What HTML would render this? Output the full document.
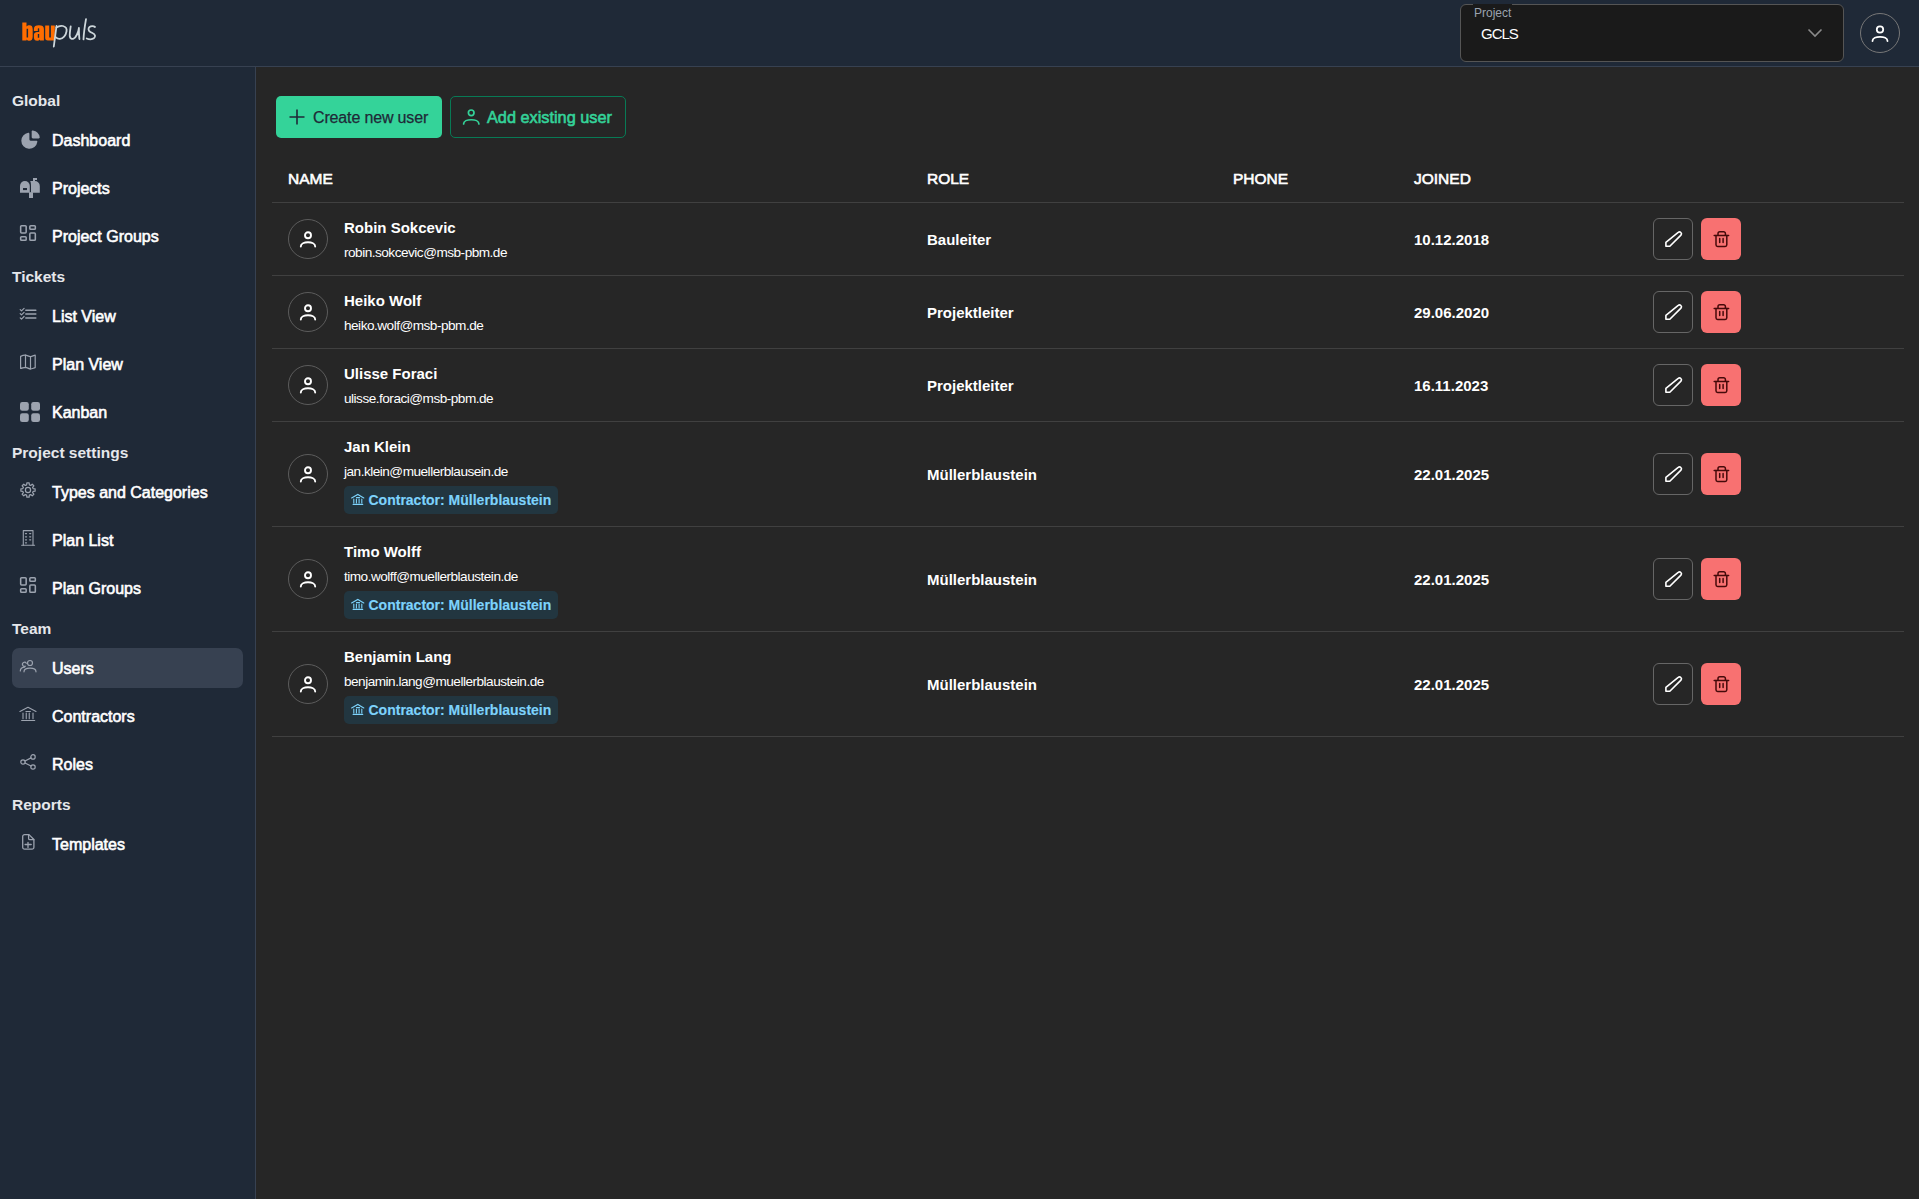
<!DOCTYPE html>
<html><head><meta charset="utf-8">
<style>
*{box-sizing:border-box;margin:0;padding:0}
html,body{width:1919px;height:1199px;overflow:hidden;background:#262626;font-family:"Liberation Sans",sans-serif;color:#fff}
.a{position:absolute}
.t{position:absolute;white-space:nowrap;line-height:20px}
.hdr{position:absolute;left:0;top:0;width:1919px;height:67px;background:#1f2937;border-bottom:1px solid #374151}
.side{position:absolute;left:0;top:67px;width:256px;height:1132px;background:#1f2937;border-right:1px solid #374151}
.sb{-webkit-text-stroke:0.6px currentColor}
.sec{font-size:15.5px;font-weight:bold;color:#e5e7eb;left:12px}
.itm{font-size:16px;color:#fff;left:52px;-webkit-text-stroke:0.6px #fff}
.ico{position:absolute;left:18px;width:24px;height:24px}
.ico svg{width:24px;height:24px;display:block}
.th{font-size:15.5px;color:#fff;-webkit-text-stroke:0.6px #fff}
.rowb{position:absolute;left:272px;width:1632px;height:1px;background:#404040}
.av{position:absolute;left:288px;width:40px;height:40px;border:1px solid #5c5c5c;border-radius:50%}
.av svg{position:absolute;left:9px;top:9px;width:20px;height:20px}
.nm{font-size:15px;font-weight:bold;color:#fff;left:344px}
.em{font-size:13.6px;color:#fff;left:344px;letter-spacing:-0.5px}
.rl{font-size:15px;font-weight:bold;color:#fff;left:927px}
.jd{font-size:15px;font-weight:bold;color:#fff;left:1414px;letter-spacing:0px}
.badge{position:absolute;left:344px;width:214px;height:28px;background:#223640;border-radius:5px}
.badge .bt{position:absolute;left:24.5px;top:4px;line-height:20px;font-size:14px;font-weight:bold;color:#7dd3fc;white-space:nowrap;-webkit-text-stroke:0.15px #7dd3fc}
.badge svg{position:absolute;left:7px;top:7px;width:14px;height:14px}
.eb{position:absolute;left:1653px;width:40px;height:42px;border:1px solid #666;border-radius:6px}
.db{position:absolute;left:1701px;width:40px;height:42px;background:#f87171;border-radius:6px}
.eb svg,.db svg{position:absolute;left:10px;top:11px;width:20px;height:20px}
</style></head><body>

<!-- header -->
<div class="hdr"></div>
<svg class="a" style="left:0;top:0" width="110" height="60" viewBox="0 0 110 60">
  <g fill="#ff6d00" fill-rule="evenodd">
    <path d="M22.3 22.5 H26.5 V26.6 C27.2 25.8 28.2 25.3 29.5 25.3 C31.8 25.3 32.7 26.8 32.7 29.5 V36.5 C32.7 39.3 31.7 40.8 29.4 40.8 C28.2 40.8 27.2 40.3 26.5 39.4 V40.6 H22.3 Z M26.6 28.7 H28.1 V37.5 H26.6 Z"/>
    <path d="M33.9 29.2 C33.9 26.3 35.8 25.3 38.9 25.3 C42.1 25.3 43.9 26.3 43.9 29 V40.6 H39.9 V39.6 C39.2 40.4 38.3 40.8 37.2 40.8 C35 40.8 33.9 39.6 33.9 37.2 V35 C33.9 33 35 32.3 37.5 31.9 H39.2 V28.8 C39.2 28.4 39 28.3 38.5 28.3 C38 28.3 37.8 28.5 37.8 29 V31 H33.9 Z M37.8 34.1 H39.2 V37.8 H37.8 Z"/>
    <path d="M45.2 25.6 H49.2 V37.5 H50.9 V25.6 H54.8 V40.6 H47.9 C46 40.6 45.2 39.6 45.2 37.8 Z"/>
  </g>
  <g fill="none" stroke="#cdd6da" stroke-width="1.8" stroke-linecap="round" stroke-linejoin="round">
    <path d="M53.8 46.5 L56.5 26"/>
    <path d="M56.4 27.5 C58.5 26 61 25.5 63 26 C66 26.8 67 29 66.5 31.5 C65.8 35.5 63 38.7 60 38.9 C58.5 39 57 38.5 56 37.4"/>
    <path d="M70.7 26.3 C70.2 30 69.5 34 69.8 36.5 C70.2 38.8 72 39.2 73.5 38.7 C76 37.8 78.5 32 78.9 28 C78.9 32 79 36 79.4 39"/>
    <path d="M86 19.2 C85 25 83.8 32 83.5 39.4"/>
    <path d="M95 27 C93.8 26 91 25.8 89.5 27 C88 28.2 88.3 30.5 90 31.7 C91.8 33 94.5 33.5 95 35.5 C95.5 38 93 39.3 90.5 39.3 C89 39.3 87.5 38.9 86.7 38.5"/>
  </g>
</svg>
<!-- project select -->
<div class="a" style="left:1460px;top:4px;width:384px;height:58px;background:#1a1a1a;border:1px solid #555;border-radius:6px"></div>
<div class="a" style="left:1473px;top:4px;width:39px;height:2px;background:#1a1a1a"></div>
<div class="t" style="left:1474px;top:3px;font-size:12px;color:#9ca3af">Project</div>
<div class="t" style="left:1481px;top:24px;font-size:15px;color:#fff;letter-spacing:-1px">GCLS</div>
<svg class="a" style="left:1806px;top:26px" width="18" height="14" viewBox="0 0 18 14" fill="none" stroke="#8a8a8a" stroke-width="1.6"><path d="M2.5 3.5 L9 10 L15.5 3.5"/></svg>
<div class="a" style="left:1860px;top:13px;width:40px;height:40px;border:1px solid #777;border-radius:50%"></div>
<svg class="a" style="left:1870px;top:23px" width="20" height="20" viewBox="0 0 20 20" fill="none" stroke="#fff" stroke-width="1.8"><circle cx="10" cy="6.5" r="3.2"/><path d="M2.5 18 C2.5 12.5 17.5 12.5 17.5 18" stroke-linecap="round"/></svg>

<!-- sidebar -->
<div class="side"></div>
<div class="a" style="left:12px;top:648px;width:231px;height:40px;background:#374151;border-radius:7px"></div>

<div class="t sec" style="top:91px">Global</div>
<div class="t itm" style="top:131px">Dashboard</div>
<div class="t itm" style="top:179px">Projects</div>
<div class="t itm" style="top:227px">Project Groups</div>
<div class="t sec" style="top:267px">Tickets</div>
<div class="t itm" style="top:307px">List View</div>
<div class="t itm" style="top:355px">Plan View</div>
<div class="t itm" style="top:403px">Kanban</div>
<div class="t sec" style="top:443px">Project settings</div>
<div class="t itm" style="top:483px">Types and Categories</div>
<div class="t itm" style="top:531px">Plan List</div>
<div class="t itm" style="top:579px">Plan Groups</div>
<div class="t sec" style="top:619px">Team</div>
<div class="t itm" style="top:659px">Users</div>
<div class="t itm" style="top:707px">Contractors</div>
<div class="t itm" style="top:755px">Roles</div>
<div class="t sec" style="top:795px">Reports</div>
<div class="t itm" style="top:835px">Templates</div>



<!-- icons -->
<svg class="a" style="left:18.5px;top:127.7px" width="23.1" height="23.1" viewBox="0 0 20 20" fill="#9ca3af" stroke="none"><path d="M12 9a1 1 0 01-1-1V3c0-.553.45-1.008.997-.93a7.004 7.004 0 015.933 5.933c.078.547-.378.997-.93.997h-5z"/><path d="M8.003 4.07C8.55 3.992 9 4.447 9 5v5a1 1 0 001 1h5c.552 0 1.008.45.93.997A7.001 7.001 0 012 11a7.002 7.002 0 016.003-6.93z"/></svg>
<svg class="a" style="left:20px;top:178px" width="20" height="20" viewBox="0 0 20 20" fill="#9ca3af" stroke="none"><path d="M0 14.7V7.9A4.9 4.9 0 0 1 9.8 7.9V14.7Z"/><path d="M10.2 3H14.8A5 5 0 0 1 19.8 8V14.7H11V8C11 6 10.8 4.2 10.2 3Z"/><rect x="9" y="14.2" width="4" height="5.8"/><rect x="13" y="0" width="2" height="3.5"/><rect x="13" y="0" width="4" height="2"/><rect x="3" y="10" width="4" height="2.1" fill="#1f2937"/></svg>
<svg class="a" style="left:16.7px;top:222.4px" width="22" height="22" viewBox="0 0 24 24" fill="none" stroke="#9ca3af" stroke-width="1.7" stroke-linecap="round" stroke-linejoin="round"><path d="M5 4h4a1 1 0 0 1 1 1v6a1 1 0 0 1 -1 1h-4a1 1 0 0 1 -1 -1v-6a1 1 0 0 1 1 -1"/><path d="M5 16h4a1 1 0 0 1 1 1v2a1 1 0 0 1 -1 1h-4a1 1 0 0 1 -1 -1v-2a1 1 0 0 1 1 -1"/><path d="M15 12h4a1 1 0 0 1 1 1v6a1 1 0 0 1 -1 1h-4a1 1 0 0 1 -1 -1v-6a1 1 0 0 1 1 -1"/><path d="M15 4h4a1 1 0 0 1 1 1v2a1 1 0 0 1 -1 1h-4a1 1 0 0 1 -1 -1v-2a1 1 0 0 1 1 -1"/></svg>
<svg class="a" style="left:16.7px;top:574.4px" width="22" height="22" viewBox="0 0 24 24" fill="none" stroke="#9ca3af" stroke-width="1.7" stroke-linecap="round" stroke-linejoin="round"><path d="M5 4h4a1 1 0 0 1 1 1v6a1 1 0 0 1 -1 1h-4a1 1 0 0 1 -1 -1v-6a1 1 0 0 1 1 -1"/><path d="M5 16h4a1 1 0 0 1 1 1v2a1 1 0 0 1 -1 1h-4a1 1 0 0 1 -1 -1v-2a1 1 0 0 1 1 -1"/><path d="M15 12h4a1 1 0 0 1 1 1v6a1 1 0 0 1 -1 1h-4a1 1 0 0 1 -1 -1v-6a1 1 0 0 1 1 -1"/><path d="M15 4h4a1 1 0 0 1 1 1v2a1 1 0 0 1 -1 1h-4a1 1 0 0 1 -1 -1v-2a1 1 0 0 1 1 -1"/></svg>
<svg class="a" style="left:14px;top:300px" width="30" height="30" viewBox="0 0 30 30" fill="none" stroke="#9ca3af" stroke-width="1.2" stroke-linecap="round" stroke-linejoin="round"><path d="M6.2 9.6l1.3 1.3l2.6 -2.6"/><path d="M6.2 13.6l1.3 1.3l2.6 -2.6"/><path d="M6.2 17.8l1.3 1.3l2.6 -2.6"/><path d="M11.8 10.3h10" stroke-width="1.5"/><path d="M11.8 14.1h10" stroke-width="1.5"/><path d="M11.8 18.1h10" stroke-width="1.5"/></svg>
<svg class="a" style="left:14px;top:348px" width="30" height="30" viewBox="0 0 30 30" fill="none" stroke="#9ca3af" stroke-width="1.2" stroke-linecap="round" stroke-linejoin="round"><path d="M6.6 8.4C8.3 7.6 10 7 11.5 7.2C13.2 7.4 14.8 8.5 16.5 8.6C18 8.6 19.6 7.4 21.2 7.2V19.6C19.6 20 18 21 16.5 21C14.8 21 13.2 19.4 11.5 19.3C10 19.3 8.3 20.2 6.6 20.5Z"/><path d="M11.5 7.2V19.3"/><path d="M16.5 8.6V21"/></svg>
<svg class="a" style="left:20px;top:402px" width="20" height="20" viewBox="0 0 20 20" fill="#9ca3af" stroke="none"><rect x="0" y="0" width="8.8" height="8.8" rx="2.3"/><rect x="11.2" y="0" width="8.8" height="8.8" rx="2.3"/><rect x="0" y="11.2" width="8.8" height="8.8" rx="2.3"/><rect x="11.2" y="11.2" width="8.8" height="8.8" rx="2.3"/></svg>
<svg class="a" style="left:14px;top:476px" width="30" height="30" viewBox="0 0 30 30" fill="none" stroke="#9ca3af" stroke-width="1.2" stroke-linecap="round" stroke-linejoin="round"><path d="M12.64 8.88 L12.85 6.89 L15.15 6.89 L15.36 8.88 L16.66 9.41 L18.22 8.16 L19.84 9.78 L18.59 11.34 L19.12 12.64 L21.11 12.85 L21.11 15.15 L19.12 15.36 L18.59 16.66 L19.84 18.22 L18.22 19.84 L16.66 18.59 L15.36 19.12 L15.15 21.11 L12.85 21.11 L12.64 19.12 L11.34 18.59 L9.78 19.84 L8.16 18.22 L9.41 16.66 L8.88 15.36 L6.89 15.15 L6.89 12.85 L8.88 12.64 L9.41 11.34 L8.16 9.78 L9.78 8.16 L11.34 9.41 Z"/><circle cx="14" cy="14" r="2.6"/></svg>
<svg class="a" style="left:14px;top:524px" width="30" height="30" viewBox="0 0 30 30" fill="none" stroke="#9ca3af" stroke-width="1.1" stroke-linecap="round" stroke-linejoin="round"><path d="M7.7 21.2H20.6"/><path d="M9.3 21.2V6.6H19V21.2"/><path d="M11.5 9.6h1M15.7 9.6h1M11.5 12.8h1M15.7 12.8h1M11.5 15.8h1M15.7 15.8h1M11.5 18.8h1" stroke-width="1.3"/></svg>
<svg class="a" style="left:14px;top:652px" width="30" height="30" viewBox="0 0 30 30" fill="none" stroke="#9ca3af" stroke-width="1.2" stroke-linecap="round" stroke-linejoin="round"><circle cx="16" cy="11" r="2.5"/><path d="M12.3 11.3A2.05 2.05 0 1 0 11.4 14.2"/><path d="M10 19.8C10 15 22 15 22 19.8"/><path d="M6.3 19C6.3 16.6 8 15.3 10.6 15.1"/></svg>
<svg class="a" style="left:14px;top:700px" width="30" height="30" viewBox="0 0 30 30" fill="none" stroke="#9ca3af" stroke-width="1.1" stroke-linecap="round" stroke-linejoin="round"><path d="M5.9 11.5L14 7.3L22 11.5"/><path d="M11.9 11.5H16.4"/><path d="M9 13.1V18.7M12.25 13.1V18.7M15.25 13.1V18.7M19 13.1V18.7"/><path d="M7.6 20.5H20.7"/></svg>
<svg class="a" style="left:14px;top:748px" width="30" height="30" viewBox="0 0 30 30" fill="none" stroke="#9ca3af" stroke-width="1.2" stroke-linecap="round" stroke-linejoin="round"><circle cx="9" cy="14" r="2.2"/><circle cx="19" cy="8.9" r="2.2"/><circle cx="19" cy="19" r="2.2"/><path d="M11 13L17 9.9"/><path d="M11 15L17 18"/></svg>
<svg class="a" style="left:14px;top:828px" width="30" height="30" viewBox="0 0 30 30" fill="none" stroke="#9ca3af" stroke-width="1.3" stroke-linecap="round" stroke-linejoin="round"><path d="M14.6 6.6V10.4A1.3 1.3 0 0 0 15.9 11.7H19.8"/><path d="M10.6 6.6H15L19.9 11.5V19.3A1.9 1.9 0 0 1 18 21.2H10.6A1.9 1.9 0 0 1 8.7 19.3V8.5A1.9 1.9 0 0 1 10.6 6.6Z"/><path d="M14 14.3V19.4M11.1 16.5H17.2"/></svg>
<!-- /icons -->
<!-- content buttons -->
<div class="a" style="left:276px;top:96px;width:166px;height:42px;background:#34d399;border-radius:5px"></div>
<svg class="a" style="left:287px;top:107px" width="20" height="20" viewBox="0 0 20 20" fill="none" stroke="#1f2937" stroke-width="1.6"><path d="M10 2.5 V17.5 M2.5 10 H17.5"/></svg>
<div class="t" style="left:313px;top:108px;font-size:16px;color:#1f2937;-webkit-text-stroke:0.25px #1f2937;letter-spacing:-0.15px">Create new user</div>

<div class="a" style="left:450px;top:96px;width:176px;height:42px;border:1px solid #087a55;border-radius:5px"></div>
<svg class="a" style="left:461px;top:107px" width="20" height="20" viewBox="0 0 20 20" fill="none" stroke="#34d399" stroke-width="1.7"><circle cx="10.2" cy="5.8" r="2.8"/><path d="M2.6 17 C2.6 11.3 17.9 11.3 17.9 17" stroke-linecap="round"/></svg>
<div class="t" style="left:487px;top:107px;font-size:16.3px;color:#34d399;-webkit-text-stroke:0.6px #34d399">Add existing user</div>

<!-- table header -->
<div class="t th" style="left:288px;top:169px">NAME</div>
<div class="t th" style="left:927px;top:169px">ROLE</div>
<div class="t th" style="left:1233px;top:169px">PHONE</div>
<div class="t th" style="left:1414px;top:169px">JOINED</div>
<div class="rowb" style="top:202px"></div>





<!-- rows -->
<div class="t nm" style="top:218px">Robin Sokcevic</div>
<div class="t em" style="top:243px">robin.sokcevic@msb-pbm.de</div>
<div class="av" style="top:219px"><svg viewBox="0 0 20 20" fill="none" stroke="#fff" stroke-width="1.9"><circle cx="10" cy="6.3" r="3"/><path d="M2.8 17.5 C2.8 11.8 17.2 11.8 17.2 17.5" stroke-linecap="round"/></svg></div>
<div class="t rl" style="top:230px">Bauleiter</div>
<div class="t jd" style="top:230px">10.12.2018</div>
<div class="eb" style="top:218px"><svg viewBox="0 0 20 20" fill="none" stroke="#fff" stroke-width="1.6" stroke-linejoin="round"><path d="M14.2 2.4 a1.95 1.95 0 0 1 2.75 2.75 L5.8 16.3 H1.9 V12.4 Z"/></svg></div>
<div class="db" style="top:218px"><svg viewBox="0 0 20 20" fill="none" stroke="#450a0a" stroke-width="1.5" stroke-linecap="round" stroke-linejoin="round"><path d="M3.2 6.4 H17.6"/><path d="M7 6.3 V4.6 a1.8 1.8 0 0 1 1.8 -1.8 H12.6 a1.8 1.8 0 0 1 1.8 1.8 V6.3"/><path d="M5 6.5 V15.8 a1.6 1.6 0 0 0 1.6 1.6 H14.2 a1.6 1.6 0 0 0 1.6 -1.6 V6.5"/><path d="M8.7 9.5 V13.6 M12.1 9.5 V13.6"/></svg></div>
<div class="rowb" style="top:275px"></div>
<div class="t nm" style="top:291px">Heiko Wolf</div>
<div class="t em" style="top:316px">heiko.wolf@msb-pbm.de</div>
<div class="av" style="top:292px"><svg viewBox="0 0 20 20" fill="none" stroke="#fff" stroke-width="1.9"><circle cx="10" cy="6.3" r="3"/><path d="M2.8 17.5 C2.8 11.8 17.2 11.8 17.2 17.5" stroke-linecap="round"/></svg></div>
<div class="t rl" style="top:303px">Projektleiter</div>
<div class="t jd" style="top:303px">29.06.2020</div>
<div class="eb" style="top:291px"><svg viewBox="0 0 20 20" fill="none" stroke="#fff" stroke-width="1.6" stroke-linejoin="round"><path d="M14.2 2.4 a1.95 1.95 0 0 1 2.75 2.75 L5.8 16.3 H1.9 V12.4 Z"/></svg></div>
<div class="db" style="top:291px"><svg viewBox="0 0 20 20" fill="none" stroke="#450a0a" stroke-width="1.5" stroke-linecap="round" stroke-linejoin="round"><path d="M3.2 6.4 H17.6"/><path d="M7 6.3 V4.6 a1.8 1.8 0 0 1 1.8 -1.8 H12.6 a1.8 1.8 0 0 1 1.8 1.8 V6.3"/><path d="M5 6.5 V15.8 a1.6 1.6 0 0 0 1.6 1.6 H14.2 a1.6 1.6 0 0 0 1.6 -1.6 V6.5"/><path d="M8.7 9.5 V13.6 M12.1 9.5 V13.6"/></svg></div>
<div class="rowb" style="top:348px"></div>
<div class="t nm" style="top:364px">Ulisse Foraci</div>
<div class="t em" style="top:389px">ulisse.foraci@msb-pbm.de</div>
<div class="av" style="top:365px"><svg viewBox="0 0 20 20" fill="none" stroke="#fff" stroke-width="1.9"><circle cx="10" cy="6.3" r="3"/><path d="M2.8 17.5 C2.8 11.8 17.2 11.8 17.2 17.5" stroke-linecap="round"/></svg></div>
<div class="t rl" style="top:376px">Projektleiter</div>
<div class="t jd" style="top:376px">16.11.2023</div>
<div class="eb" style="top:364px"><svg viewBox="0 0 20 20" fill="none" stroke="#fff" stroke-width="1.6" stroke-linejoin="round"><path d="M14.2 2.4 a1.95 1.95 0 0 1 2.75 2.75 L5.8 16.3 H1.9 V12.4 Z"/></svg></div>
<div class="db" style="top:364px"><svg viewBox="0 0 20 20" fill="none" stroke="#450a0a" stroke-width="1.5" stroke-linecap="round" stroke-linejoin="round"><path d="M3.2 6.4 H17.6"/><path d="M7 6.3 V4.6 a1.8 1.8 0 0 1 1.8 -1.8 H12.6 a1.8 1.8 0 0 1 1.8 1.8 V6.3"/><path d="M5 6.5 V15.8 a1.6 1.6 0 0 0 1.6 1.6 H14.2 a1.6 1.6 0 0 0 1.6 -1.6 V6.5"/><path d="M8.7 9.5 V13.6 M12.1 9.5 V13.6"/></svg></div>
<div class="rowb" style="top:421px"></div>
<div class="t nm" style="top:437px">Jan Klein</div>
<div class="t em" style="top:462px">jan.klein@muellerblausein.de</div>
<div class="av" style="top:454px"><svg viewBox="0 0 20 20" fill="none" stroke="#fff" stroke-width="1.9"><circle cx="10" cy="6.3" r="3"/><path d="M2.8 17.5 C2.8 11.8 17.2 11.8 17.2 17.5" stroke-linecap="round"/></svg></div>
<div class="t rl" style="top:465px">Müllerblaustein</div>
<div class="t jd" style="top:465px">22.01.2025</div>
<div class="eb" style="top:453px"><svg viewBox="0 0 20 20" fill="none" stroke="#fff" stroke-width="1.6" stroke-linejoin="round"><path d="M14.2 2.4 a1.95 1.95 0 0 1 2.75 2.75 L5.8 16.3 H1.9 V12.4 Z"/></svg></div>
<div class="db" style="top:453px"><svg viewBox="0 0 20 20" fill="none" stroke="#450a0a" stroke-width="1.5" stroke-linecap="round" stroke-linejoin="round"><path d="M3.2 6.4 H17.6"/><path d="M7 6.3 V4.6 a1.8 1.8 0 0 1 1.8 -1.8 H12.6 a1.8 1.8 0 0 1 1.8 1.8 V6.3"/><path d="M5 6.5 V15.8 a1.6 1.6 0 0 0 1.6 1.6 H14.2 a1.6 1.6 0 0 0 1.6 -1.6 V6.5"/><path d="M8.7 9.5 V13.6 M12.1 9.5 V13.6"/></svg></div>
<div class="badge" style="top:486px"><svg viewBox="0 0 14 14" fill="none" stroke="#7dd3fc" stroke-width="1.1" stroke-linecap="round"><path d="M0.6 4.9 L6.8 1.5 L12.8 5"/><path d="M5.5 4.6 H8.5"/><path d="M2.8 6.1 V9.9 M5.4 6.1 V9.9 M8.1 6.1 V9.9 M10.8 6.1 V9.9"/><path d="M2.1 11.4 H11.7"/></svg><div class="bt">Contractor: Müllerblaustein</div></div>
<div class="rowb" style="top:526px"></div>
<div class="t nm" style="top:542px">Timo Wolff</div>
<div class="t em" style="top:567px">timo.wolff@muellerblaustein.de</div>
<div class="av" style="top:559px"><svg viewBox="0 0 20 20" fill="none" stroke="#fff" stroke-width="1.9"><circle cx="10" cy="6.3" r="3"/><path d="M2.8 17.5 C2.8 11.8 17.2 11.8 17.2 17.5" stroke-linecap="round"/></svg></div>
<div class="t rl" style="top:570px">Müllerblaustein</div>
<div class="t jd" style="top:570px">22.01.2025</div>
<div class="eb" style="top:558px"><svg viewBox="0 0 20 20" fill="none" stroke="#fff" stroke-width="1.6" stroke-linejoin="round"><path d="M14.2 2.4 a1.95 1.95 0 0 1 2.75 2.75 L5.8 16.3 H1.9 V12.4 Z"/></svg></div>
<div class="db" style="top:558px"><svg viewBox="0 0 20 20" fill="none" stroke="#450a0a" stroke-width="1.5" stroke-linecap="round" stroke-linejoin="round"><path d="M3.2 6.4 H17.6"/><path d="M7 6.3 V4.6 a1.8 1.8 0 0 1 1.8 -1.8 H12.6 a1.8 1.8 0 0 1 1.8 1.8 V6.3"/><path d="M5 6.5 V15.8 a1.6 1.6 0 0 0 1.6 1.6 H14.2 a1.6 1.6 0 0 0 1.6 -1.6 V6.5"/><path d="M8.7 9.5 V13.6 M12.1 9.5 V13.6"/></svg></div>
<div class="badge" style="top:591px"><svg viewBox="0 0 14 14" fill="none" stroke="#7dd3fc" stroke-width="1.1" stroke-linecap="round"><path d="M0.6 4.9 L6.8 1.5 L12.8 5"/><path d="M5.5 4.6 H8.5"/><path d="M2.8 6.1 V9.9 M5.4 6.1 V9.9 M8.1 6.1 V9.9 M10.8 6.1 V9.9"/><path d="M2.1 11.4 H11.7"/></svg><div class="bt">Contractor: Müllerblaustein</div></div>
<div class="rowb" style="top:631px"></div>
<div class="t nm" style="top:647px">Benjamin Lang</div>
<div class="t em" style="top:672px">benjamin.lang@muellerblaustein.de</div>
<div class="av" style="top:664px"><svg viewBox="0 0 20 20" fill="none" stroke="#fff" stroke-width="1.9"><circle cx="10" cy="6.3" r="3"/><path d="M2.8 17.5 C2.8 11.8 17.2 11.8 17.2 17.5" stroke-linecap="round"/></svg></div>
<div class="t rl" style="top:675px">Müllerblaustein</div>
<div class="t jd" style="top:675px">22.01.2025</div>
<div class="eb" style="top:663px"><svg viewBox="0 0 20 20" fill="none" stroke="#fff" stroke-width="1.6" stroke-linejoin="round"><path d="M14.2 2.4 a1.95 1.95 0 0 1 2.75 2.75 L5.8 16.3 H1.9 V12.4 Z"/></svg></div>
<div class="db" style="top:663px"><svg viewBox="0 0 20 20" fill="none" stroke="#450a0a" stroke-width="1.5" stroke-linecap="round" stroke-linejoin="round"><path d="M3.2 6.4 H17.6"/><path d="M7 6.3 V4.6 a1.8 1.8 0 0 1 1.8 -1.8 H12.6 a1.8 1.8 0 0 1 1.8 1.8 V6.3"/><path d="M5 6.5 V15.8 a1.6 1.6 0 0 0 1.6 1.6 H14.2 a1.6 1.6 0 0 0 1.6 -1.6 V6.5"/><path d="M8.7 9.5 V13.6 M12.1 9.5 V13.6"/></svg></div>
<div class="badge" style="top:696px"><svg viewBox="0 0 14 14" fill="none" stroke="#7dd3fc" stroke-width="1.1" stroke-linecap="round"><path d="M0.6 4.9 L6.8 1.5 L12.8 5"/><path d="M5.5 4.6 H8.5"/><path d="M2.8 6.1 V9.9 M5.4 6.1 V9.9 M8.1 6.1 V9.9 M10.8 6.1 V9.9"/><path d="M2.1 11.4 H11.7"/></svg><div class="bt">Contractor: Müllerblaustein</div></div>
<div class="rowb" style="top:736px"></div>
<!-- /rows -->
</body></html>
